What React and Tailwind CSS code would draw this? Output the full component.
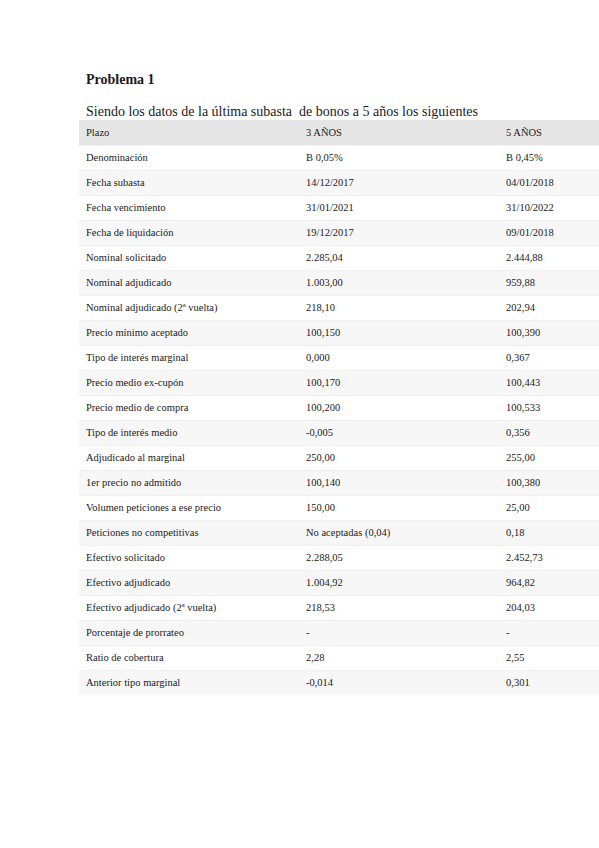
import React from 'react';

const rows = [
    ['Denominación', 'B 0,05%', 'B 0,45%'],
    ['Fecha subasta', '14/12/2017', '04/01/2018'],
    ['Fecha vencimiento', '31/01/2021', '31/10/2022'],
    ['Fecha de liquidación', '19/12/2017', '09/01/2018'],
    ['Nominal solicitado', '2.285,04', '2.444,88'],
    ['Nominal adjudicado', '1.003,00', '959,88'],
    ['Nominal adjudicado (2ª vuelta)', '218,10', '202,94'],
    ['Precio mínimo aceptado', '100,150', '100,390'],
    ['Tipo de interés marginal', '0,000', '0,367'],
    ['Precio medio ex-cupón', '100,170', '100,443'],
    ['Precio medio de compra', '100,200', '100,533'],
    ['Tipo de interés medio', '-0,005', '0,356'],
    ['Adjudicado al marginal', '250,00', '255,00'],
    ['1er precio no admitido', '100,140', '100,380'],
    ['Volumen peticiones a ese precio', '150,00', '25,00'],
    ['Peticiones no competitivas', 'No aceptadas (0,04)', '0,18'],
    ['Efectivo solicitado', '2.288,05', '2.452,73'],
    ['Efectivo adjudicado', '1.004,92', '964,82'],
    ['Efectivo adjudicado (2ª vuelta)', '218,53', '204,03'],
    ['Porcentaje de prorrateo', '-', '-'],
    ['Ratio de cobertura', '2,28', '2,55'],
    ['Anterior tipo marginal', '-0,014', '0,301'],
];

const Row = ({ cells, className }) => (
    <div className={`flex h-[25px] items-center ${className}`}>
        <div className="w-[220px] shrink-0 pl-[7px]">{cells[0]}</div>
        <div className="w-[200px] shrink-0 pl-[7px]">{cells[1]}</div>
        <div className="w-[200px] shrink-0 pl-[7px]">{cells[2]}</div>
    </div>
);

const App = () => {
    return (
        <div className="w-[599px] h-[848px] overflow-hidden bg-white text-[#1a1a1a] font-['Liberation_Serif',serif]">
            <div className="pl-[86px] pt-[70px]">
                <h1 className="text-[14px] font-bold leading-[20px]">Problema 1</h1>
                <p className="mt-[13px] text-[14px] leading-[17px] whitespace-pre">Siendo los datos de la última subasta  de bonos a 5 años los siguientes</p>
            </div>

            {/* Tabla de la subasta */}
            <div className="ml-[79px] w-[620px] text-[10.5px]">
                <Row cells={['Plazo', '3 AÑOS', '5 AÑOS']} className="bg-[#e6e6e6]" />
                {rows.map((r, i) => (
                    <Row
                        key={r[0]}
                        cells={r}
                        className={i % 2 === 1 ? 'bg-[#f7f7f7] border-t border-[#efefef]' : 'bg-white border-t border-[#efefef]'}
                    />
                ))}
            </div>
        </div>
    );
};

export default App;
